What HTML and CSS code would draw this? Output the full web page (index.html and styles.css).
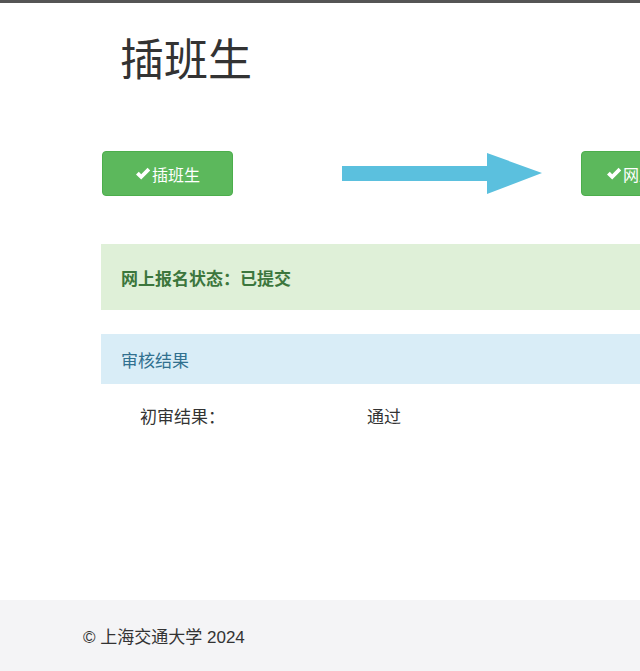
FILE: index.html
```html
<!DOCTYPE html>
<html lang="zh-CN">
<head>
<meta charset="utf-8">
<title>插班生</title>
<link rel="stylesheet" href="styles.css">
</head>
<body>
<div class="topbar"></div>
<main class="main">
  <h1 class="title">插班生</h1>
  <div class="steps">
    <div class="btn"><svg class="check" width="16" height="14" viewBox="0 0 16 14"><path d="M1 7.5 L3.8 4.8 L6.2 7.2 L12.6 0.8 L15.2 3.4 L6.2 12.4 Z" fill="#fff"/></svg>插班生</div>
    <svg class="arrow" width="200" height="42" viewBox="0 0 200 42">
      <polygon points="0,13 145,13 145,0 200,20 145,41 145,28 0,28" fill="#5bc0de"/>
    </svg>
    <div class="btn"><svg class="check" width="16" height="14" viewBox="0 0 16 14"><path d="M1 7.5 L3.8 4.8 L6.2 7.2 L12.6 0.8 L15.2 3.4 L6.2 12.4 Z" fill="#fff"/></svg>网上报名</div>
  </div>
  <div class="alert">网上报名状态：已提交</div>
  <div class="panel-heading">审核结果</div>
  <div class="result-row">
    <span class="label">初审结果：</span>
    <span class="value">通过</span>
  </div>
</main>
<footer class="footer">© 上海交通大学 2024</footer>
</body>
</html>
```
FILE: styles.css
```css
html, body {
  margin: 0;
  padding: 0;
  overflow: hidden;
}
body {
  font-family: "Liberation Sans", "Noto Sans CJK SC", sans-serif;
  color: #333;
  background: #fff;
}
.topbar {
  height: 3px;
  background: #555;
}
.main {
  padding-left: 101px;
  height: 597px;
  box-sizing: border-box;
  overflow: hidden;
}
.title {
  margin: 33px 0 0 0;
  padding-left: 19px;
  font-size: 44px;
  font-weight: normal;
  line-height: 50px;
  color: #333;
}
.steps {
  margin-top: 65px;
  display: flex;
  align-items: center;
  white-space: nowrap;
}
.btn {
  flex: none;
  width: 131px;
  height: 45px;
  box-sizing: border-box;
  margin-left: 1px;
  background: #5cb85c;
  border: 1px solid #4cae4c;
  border-radius: 4px;
  color: #fff;
  font-size: 16px;
  display: flex;
  align-items: center;
  justify-content: center;
}
.check {
  flex: none;
  margin-right: 1px;
}
.arrow {
  flex: none;
  margin-left: 109px;
  margin-right: 38px;
}
.alert {
  margin-top: 48px;
  height: 66px;
  box-sizing: border-box;
  padding-left: 20px;
  display: flex;
  align-items: center;
  background: #dff0d8;
  color: #3c763d;
  font-weight: bold;
  font-size: 17px;
}
.panel-heading {
  margin-top: 24px;
  height: 50px;
  box-sizing: border-box;
  padding-left: 20px;
  display: flex;
  align-items: center;
  background: #d9edf7;
  color: #31708f;
  font-size: 17px;
}
.result-row {
  display: grid;
  grid-template-columns: 227px auto;
  padding-left: 39px;
  height: 62px;
  align-items: center;
  font-size: 17px;
  color: #333;
}
.footer {
  height: 71px;
  box-sizing: border-box;
  padding-left: 83px;
  display: flex;
  align-items: center;
  background: #f4f4f6;
  font-size: 17px;
  color: #333;
}
```
